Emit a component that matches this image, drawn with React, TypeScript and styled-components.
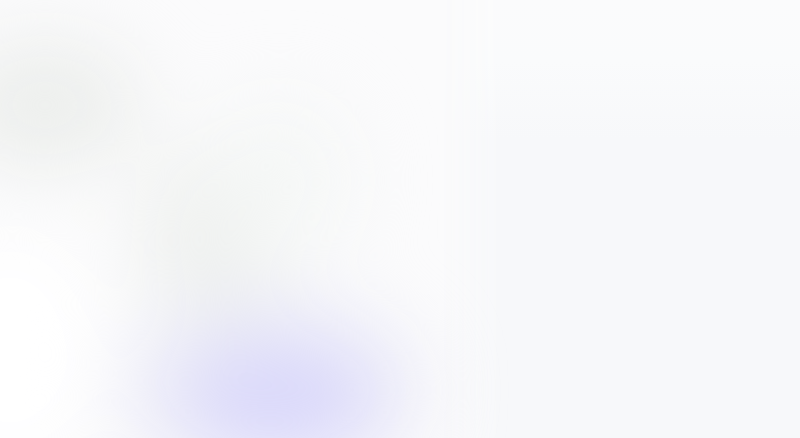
import React from "react";
import styled, { createGlobalStyle } from "styled-components";

const Global = createGlobalStyle`
  html, body { margin: 0; padding: 0; }
  body { background: #fafbfc; font-family: "Inter", "Liberation Sans", sans-serif; overflow: hidden; }
`;

const Page = styled.div`
  width: 800px;
  height: 438px;
  overflow: hidden;
  background: #fbfbfc;
  display: flex;
`;

const LeftPane = styled.div`
  position: relative;
  width: 440px;
  flex: none;
  z-index: 1;
`;

const RightPane = styled.div`
  flex: 1;
  background: linear-gradient(180deg, #fbfbfc 0px, #fafbfc 60px, #f7f8fa 140px, #f7f8fa 100%);
  -webkit-mask-image: linear-gradient(90deg, transparent 0px, #000 60px);
  mask-image: linear-gradient(90deg, transparent 0px, #000 60px);
`;

const Backdrop = styled.div`
  position: absolute;
  inset: 0;
  filter: blur(40px);
  pointer-events: none;
`;

const Blob = styled.div<{ $x: number; $y: number; $w: number; $h: number; $c: string }>`
  position: absolute;
  left: ${(p) => p.$x}px;
  top: ${(p) => p.$y}px;
  width: ${(p) => p.$w}px;
  height: ${(p) => p.$h}px;
  border-radius: 50%;
  background: ${(p) => p.$c};
`;

const blobs = [
  { x: -50, y: 40, w: 190, h: 130, c: "#eceeec" },
  { x: 140, y: 140, w: 150, h: 190, c: "#eef0ee" },
  { x: 210, y: 100, w: 140, h: 160, c: "#f5f7f6" },
  { x: 120, y: 300, w: 300, h: 180, c: "#ebebf7" },
  { x: 185, y: 345, w: 190, h: 110, c: "#d9d7fb" },
  { x: -80, y: 230, w: 180, h: 240, c: "#ffffff" },
];

export default function App() {
  return (
    <>
      <Global />
      <Page>
        <LeftPane>
          <Backdrop>
            {blobs.map((b, i) => (
              <Blob key={i} $x={b.x} $y={b.y} $w={b.w} $h={b.h} $c={b.c} />
            ))}
          </Backdrop>
        </LeftPane>
        <RightPane />
      </Page>
    </>
  );
}
